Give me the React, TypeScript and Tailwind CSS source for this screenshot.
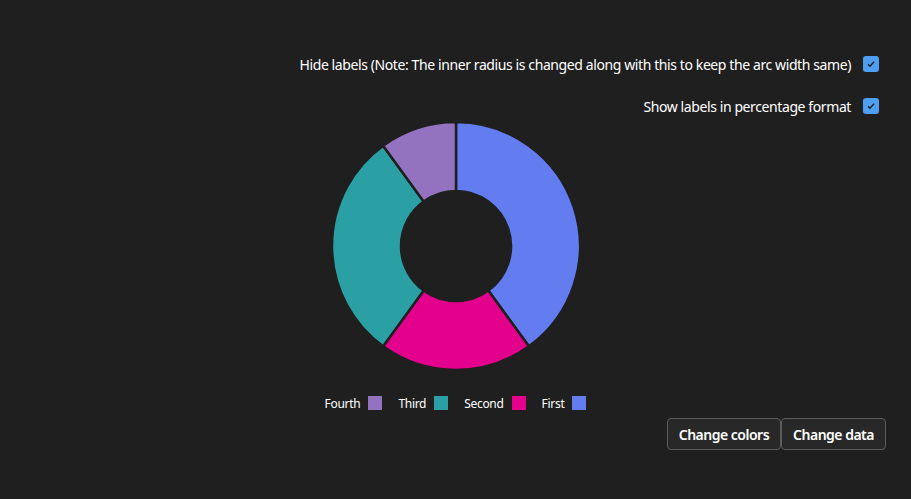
import React from "react";

const data = [
  { label: "First", value: 40, color: "#637cef" },
  { label: "Second", value: 20, color: "#e3008c" },
  { label: "Third", value: 30, color: "#2aa0a4" },
  { label: "Fourth", value: 10, color: "#9373c0" },
];

const pt = (cx: number, cy: number, r: number, deg: number) => {
  const a = (deg * Math.PI) / 180;
  return [cx + r * Math.sin(a), cy - r * Math.cos(a)];
};

const arcPath = (start: number, end: number, ro: number, ri: number) => {
  const c = 125;
  const [x1, y1] = pt(c, c, ro, start);
  const [x2, y2] = pt(c, c, ro, end);
  const [x3, y3] = pt(c, c, ri, end);
  const [x4, y4] = pt(c, c, ri, start);
  const large = end - start > 180 ? 1 : 0;
  return `M${x1} ${y1} A${ro} ${ro} 0 ${large} 1 ${x2} ${y2} L${x3} ${y3} A${ri} ${ri} 0 ${large} 0 ${x4} ${y4} Z`;
};

const Check = () => (
  <div className="w-4 h-4 rounded-[3px] bg-[#4f9ef2] flex items-center justify-center">
    <svg width="10" height="10" viewBox="0 0 10 10">
      <path d="M2 5.2 L4 7.2 L8 2.8" fill="none" stroke="#1f1f1f" strokeWidth="1.4" />
    </svg>
  </div>
);

const Donut = () => {
  const total = data.reduce((s, d) => s + d.value, 0);
  let acc = 0;
  return (
    <svg width="250" height="250" viewBox="0 0 250 250" className="mx-auto block">
      {data.map((d) => {
        const start = (acc / total) * 360;
        acc += d.value;
        const end = (acc / total) * 360;
        return (
          <path
            key={d.label}
            d={arcPath(start, end, 124, 55)}
            fill={d.color}
            stroke="#1f1f1f"
            strokeWidth="2.5"
          />
        );
      })}
    </svg>
  );
};

export default function App() {
  const legend = [...data].reverse();
  return (
    <div
      className="min-h-screen bg-[#1f1f1f] text-white"
      style={{ fontFamily: '"Noto Sans", "Open Sans", sans-serif' }}
    >
      <div className="flex flex-col items-end gap-[18px] pt-[52px] pr-[32px]">
        <div className="h-6 flex items-center gap-3 text-[14px] tracking-[-0.4px]">
          <span>Hide labels (Note: The inner radius is changed along with this to keep the arc width same)</span>
          <Check />
        </div>
        <div className="h-6 flex items-center gap-3 text-[14px] tracking-[-0.4px]">
          <span>Show labels in percentage format</span>
          <Check />
        </div>
      </div>

      <div className="mt-[3px]">
        <Donut />
      </div>

      <div className="mt-[25px] flex justify-center items-center gap-4 text-[12px] tracking-[-0.3px]">
        {legend.map((d) => (
          <div key={d.label} className="flex items-center gap-2 h-[14px]">
            <span className="pt-[2px]">{d.label}</span>
            <span className="w-[14px] h-[14px]" style={{ background: d.color }} />
          </div>
        ))}
      </div>

      <div className="mt-[8px] flex justify-end pr-[25px]">
        <button className="h-8 px-[11px] rounded border border-[#5c5c5c] bg-[#282828] text-[14px] font-semibold tracking-[-0.5px] text-white">
          Change colors
        </button>
        <button className="h-8 px-[11px] rounded border border-[#5c5c5c] bg-[#282828] text-[14px] font-semibold tracking-[-0.5px] text-white">
          Change data
        </button>
      </div>
    </div>
  );
}
